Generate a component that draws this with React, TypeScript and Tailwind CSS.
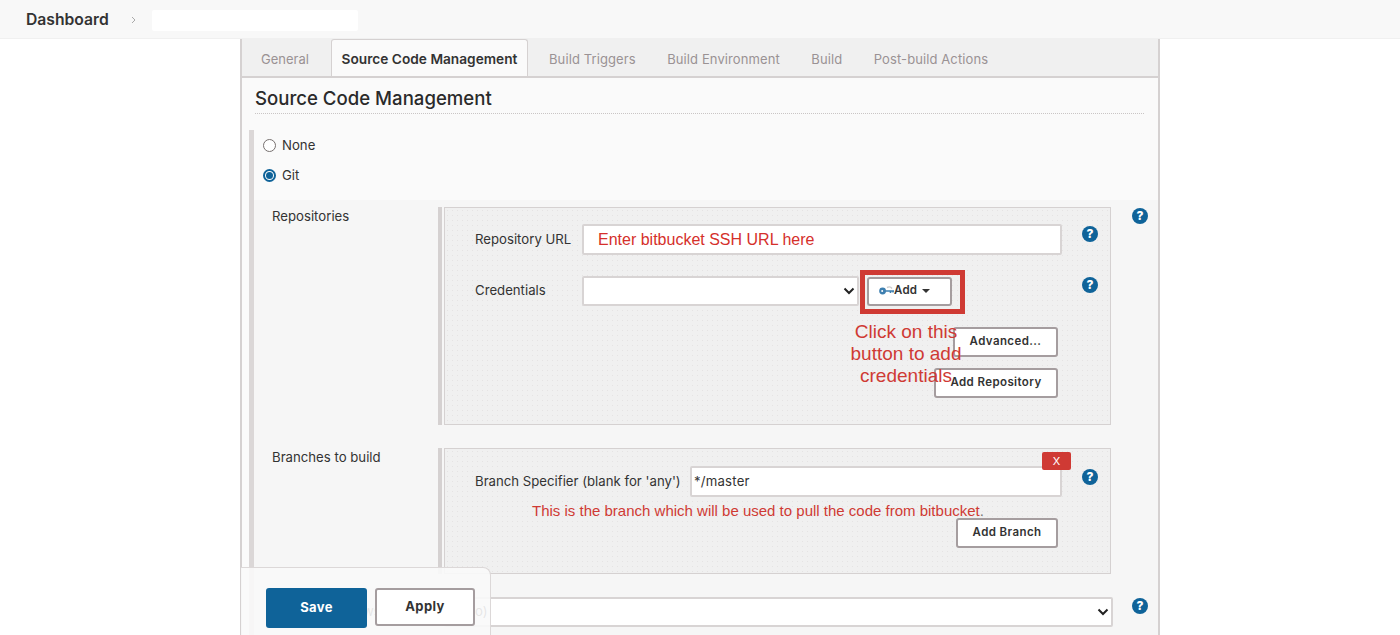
import React from "react";

const tabs = ["Build Triggers", "Build Environment", "Build", "Post-build Actions"];

const dots =
  "bg-[radial-gradient(#e5e3e3_0.8px,transparent_0.9px)] bg-[size:5px_5px]";

const Help: React.FC<{ className?: string }> = ({ className }) => (
  <span
    className={
      "flex h-4 w-4 shrink-0 items-center justify-center rounded-full bg-[#0f6399] text-[12px] font-extrabold leading-none text-white " +
      (className ?? "")
    }
  >
    ?
  </span>
);

const Chevron: React.FC = () => (
  <svg width="12" height="8" viewBox="0 0 12 8" className="shrink-0">
    <path d="M1.5 1.5 6 6l4.5-4.5" fill="none" stroke="#222" strokeWidth="2" />
  </svg>
);

const FormButton: React.FC<{ label: string; className: string }> = ({ label, className }) => (
  <button
    className={
      "h-[30px] rounded-[3px] border-2 border-[#a59d9f] bg-white text-[11.5px] font-semibold tracking-[0.4px] text-[#333] " +
      className
    }
  >
    {label}
  </button>
);

const Field: React.FC<{ children?: React.ReactNode; className: string }> = ({ children, className }) => (
  <div
    className={
      "flex items-center rounded-[2px] border-2 border-[#d8d4d4] bg-white " + className
    }
  >
    {children}
  </div>
);

export default function App() {
  return (
    <div className="h-[635px] w-[1400px] overflow-hidden bg-white font-['Inter',sans-serif] text-[13.2px] text-[#333]">
      <header className="flex h-[39px] items-center border-b border-[#f0f0f0] bg-[#f8f8f8] pl-[26px] pt-[2px]">
        <span className="w-[100px] text-[15.7px] font-semibold">Dashboard</span>
        <svg width="6" height="8" viewBox="0 0 6 8" className="ml-[5px]">
          <path d="M1 1l3 3-3 3" fill="none" stroke="#aaa" strokeWidth="1" />
        </svg>
        <div className="ml-[15px] h-[21px] w-[206px] rounded-[2px] bg-white" />
      </header>

      <main className="relative ml-[240px] h-[596px] w-[920px] border-x-2 border-[#d5d1d1] bg-[#fafafa]">
        <nav className="flex h-[39px] items-end border-b-2 border-[#d5d1d1] bg-[#f0f0f0] text-[13px] text-[#9a9294]">
          <span className="flex h-[36px] w-[89px] items-center pl-[19px] pt-[3px]">General</span>
          <span className="flex h-[37px] w-[197px] items-center justify-center rounded-t-[3px] border-x border-t border-[#d5d1d1] bg-[#fafafa] pt-[3px] text-[13.7px] font-semibold text-[#333]">
            Source Code Management
          </span>
          {tabs.map((t) => (
            <span key={t} className="flex h-[36px] items-center pl-[21px] pr-[10.5px] pt-[3px] tracking-[0.1px]">
              {t}
            </span>
          ))}
        </nav>

        <div className="ml-[13px] mr-[14px] flex h-[36px] items-end border-b border-dotted border-[#c9c5c5] pb-[1px]">
          <h2 className="text-[18.6px] font-medium leading-[28px] text-[#2a2a2a]">Source Code Management</h2>
        </div>

        <section className="ml-[7px] mt-[16px] border-l-[5px] border-[#dbd7d7]">
          <label className="flex h-[30px] items-center pl-[9px] pt-[1px]">
            <span className="h-[13px] w-[13px] rounded-full border border-[#77706f] bg-white" />
            <span className="ml-[6px]">None</span>
          </label>
          <label className="flex h-[30px] items-center pl-[9px] pt-[1px]">
            <span className="flex h-[13px] w-[13px] items-center justify-center rounded-full border-2 border-[#0f6399] bg-white">
              <span className="h-[7px] w-[7px] rounded-full bg-[#0f6399]" />
            </span>
            <span className="ml-[6px]">Git</span>
          </label>

          <div className="mt-[10px] bg-[#f6f6f6] pb-[8px] pl-[2px] pr-[8px] pt-[7px]">
            <div className="flex">
              <div className="w-[182px] pl-[16px] leading-[18px]">Repositories</div>
              <div className="w-[4px] bg-[#d5d1d1]" />
              <div
                className={
                  "relative ml-[2px] h-[218px] w-[667px] border border-[#d5d1d1] bg-[#f0f0f0] pl-[30px] pt-[16px] " + dots
                }
              >
                <div className="flex w-[623px] items-center">
                  <span className="w-[107px] pt-[1px]">Repository URL</span>
                  <Field className="h-[31px] w-[480px] pl-[14px]">
                    <span className="font-['Liberation_Sans',sans-serif] text-[16px] text-[#d5302b]">
                      Enter bitbucket SSH URL here
                    </span>
                  </Field>
                  <Help className="ml-auto -translate-y-[6px]" />
                </div>
                <div className="mt-[21px] flex w-[623px] items-center">
                  <span className="w-[107px]">Credentials</span>
                  <Field className="h-[30px] w-[277px] justify-end pr-[2px]">
                    <Chevron />
                  </Field>
                  <div className="relative ml-[8px]">
                    <button className="flex h-[29px] w-[85px] items-center rounded-[3px] border-2 border-[#a59d9f] bg-white pl-[10px] text-[11.5px] font-semibold text-[#333]">
                      <svg width="15" height="10" viewBox="0 0 15 10">
                        <path d="M8 1.5c2-1 4-.5 5 1" fill="none" stroke="#c9c9c9" strokeWidth="1.4" />
                        <circle cx="3.6" cy="5" r="3.4" fill="#3d7fb0" />
                        <circle cx="3.2" cy="5" r="1" fill="#fff" />
                        <path d="M6.5 5H15M11.5 5v2M14 5v1.6" stroke="#3d7fb0" strokeWidth="1.6" fill="none" />
                      </svg>
                      <span className="tracking-[0.2px]">Add</span>
                      <span className="ml-[5px] h-0 w-0 border-x-[4px] border-t-[4px] border-x-transparent border-t-[#333]" />
                    </button>
                    <span className="absolute left-[-7px] top-[-7px] h-[44px] w-[105px] border-[5px] border-[#cf3a34]" />
                  </div>
                  <Help className="ml-auto -translate-y-[6px]" />
                </div>
                <div className="mr-[52px] mt-[21px] flex justify-end">
                  <FormButton label="Advanced..." className="w-[105px]" />
                </div>
                <div className="mr-[52px] mt-[11px] flex justify-end">
                  <FormButton label="Add Repository" className="w-[124px]" />
                </div>
                <p className="absolute left-[386px] top-[113px] w-[150px] text-center font-['Liberation_Sans',sans-serif] text-[19px] leading-[22px] text-[#cf3a34]">
                  Click on this button to add credentials
                </p>
              </div>
              <Help className="ml-[21px] translate-y-[1px]" />
            </div>

            <div className="mt-[23px] flex">
              <div className="w-[182px] pl-[16px] leading-[18px]">Branches to build</div>
              <div className="w-[4px] bg-[#d5d1d1]" />
              <div
                className={
                  "relative ml-[2px] h-[126px] w-[667px] border border-[#d5d1d1] bg-[#f0f0f0] pl-[30px] pt-[17px] " + dots
                }
              >
                <span className="absolute left-[597px] top-[3px] flex h-[18px] w-[29px] items-center justify-center rounded-[2px] bg-[#cf3a34] text-[11px] text-white">
                  X
                </span>
                <div className="flex w-[623px] items-center">
                  <span className="w-[215px] whitespace-nowrap">Branch Specifier (blank for 'any')</span>
                  <Field className="h-[31px] w-[372px] pl-[2px]">
                    <span className="tracking-[0.2px]">*/master</span>
                  </Field>
                  <Help className="ml-auto -translate-y-[5px]" />
                </div>
                <p className="ml-[57px] mt-[6px] whitespace-nowrap font-['Liberation_Sans',sans-serif] text-[15px] leading-[16px] text-[#cf3a34]">
                  This is the branch which will be used to pull the code from bitbucket<span className="text-[#777]">.</span>
                </p>
                <div className="mr-[52px] mt-[-1px] flex justify-end">
                  <FormButton label="Add Branch" className="w-[102px]" />
                </div>
              </div>
            </div>

            <div className="mt-[23px] flex items-center">
              <div className="w-[188px] pl-[16px]">Repository browser</div>
              <Field className="h-[30px] w-[669px] justify-between pl-[3px] pr-[2px]">
                <span>(Auto)</span>
                <Chevron />
              </Field>
              <Help className="ml-[19px] -translate-y-[6px]" />
            </div>
          </div>
        </section>

        <div className="absolute bottom-0 left-[-1px] flex h-[68px] w-[250px] gap-[8px] rounded-tr-[8px] border-r border-t border-[#dcd8d8] bg-[#fafafa]/90 pl-[25px] pt-[20px]">
          <button className="h-[40px] w-[101px] rounded-[3px] bg-[#0f6399] text-[13px] font-bold tracking-[0.4px] text-white">
            Save
          </button>
          <button className="h-[38px] w-[100px] rounded-[3px] border-2 border-[#a59d9f] bg-white text-[13px] font-bold tracking-[0.4px] text-[#333]">
            Apply
          </button>
        </div>
      </main>
    </div>
  );
}
